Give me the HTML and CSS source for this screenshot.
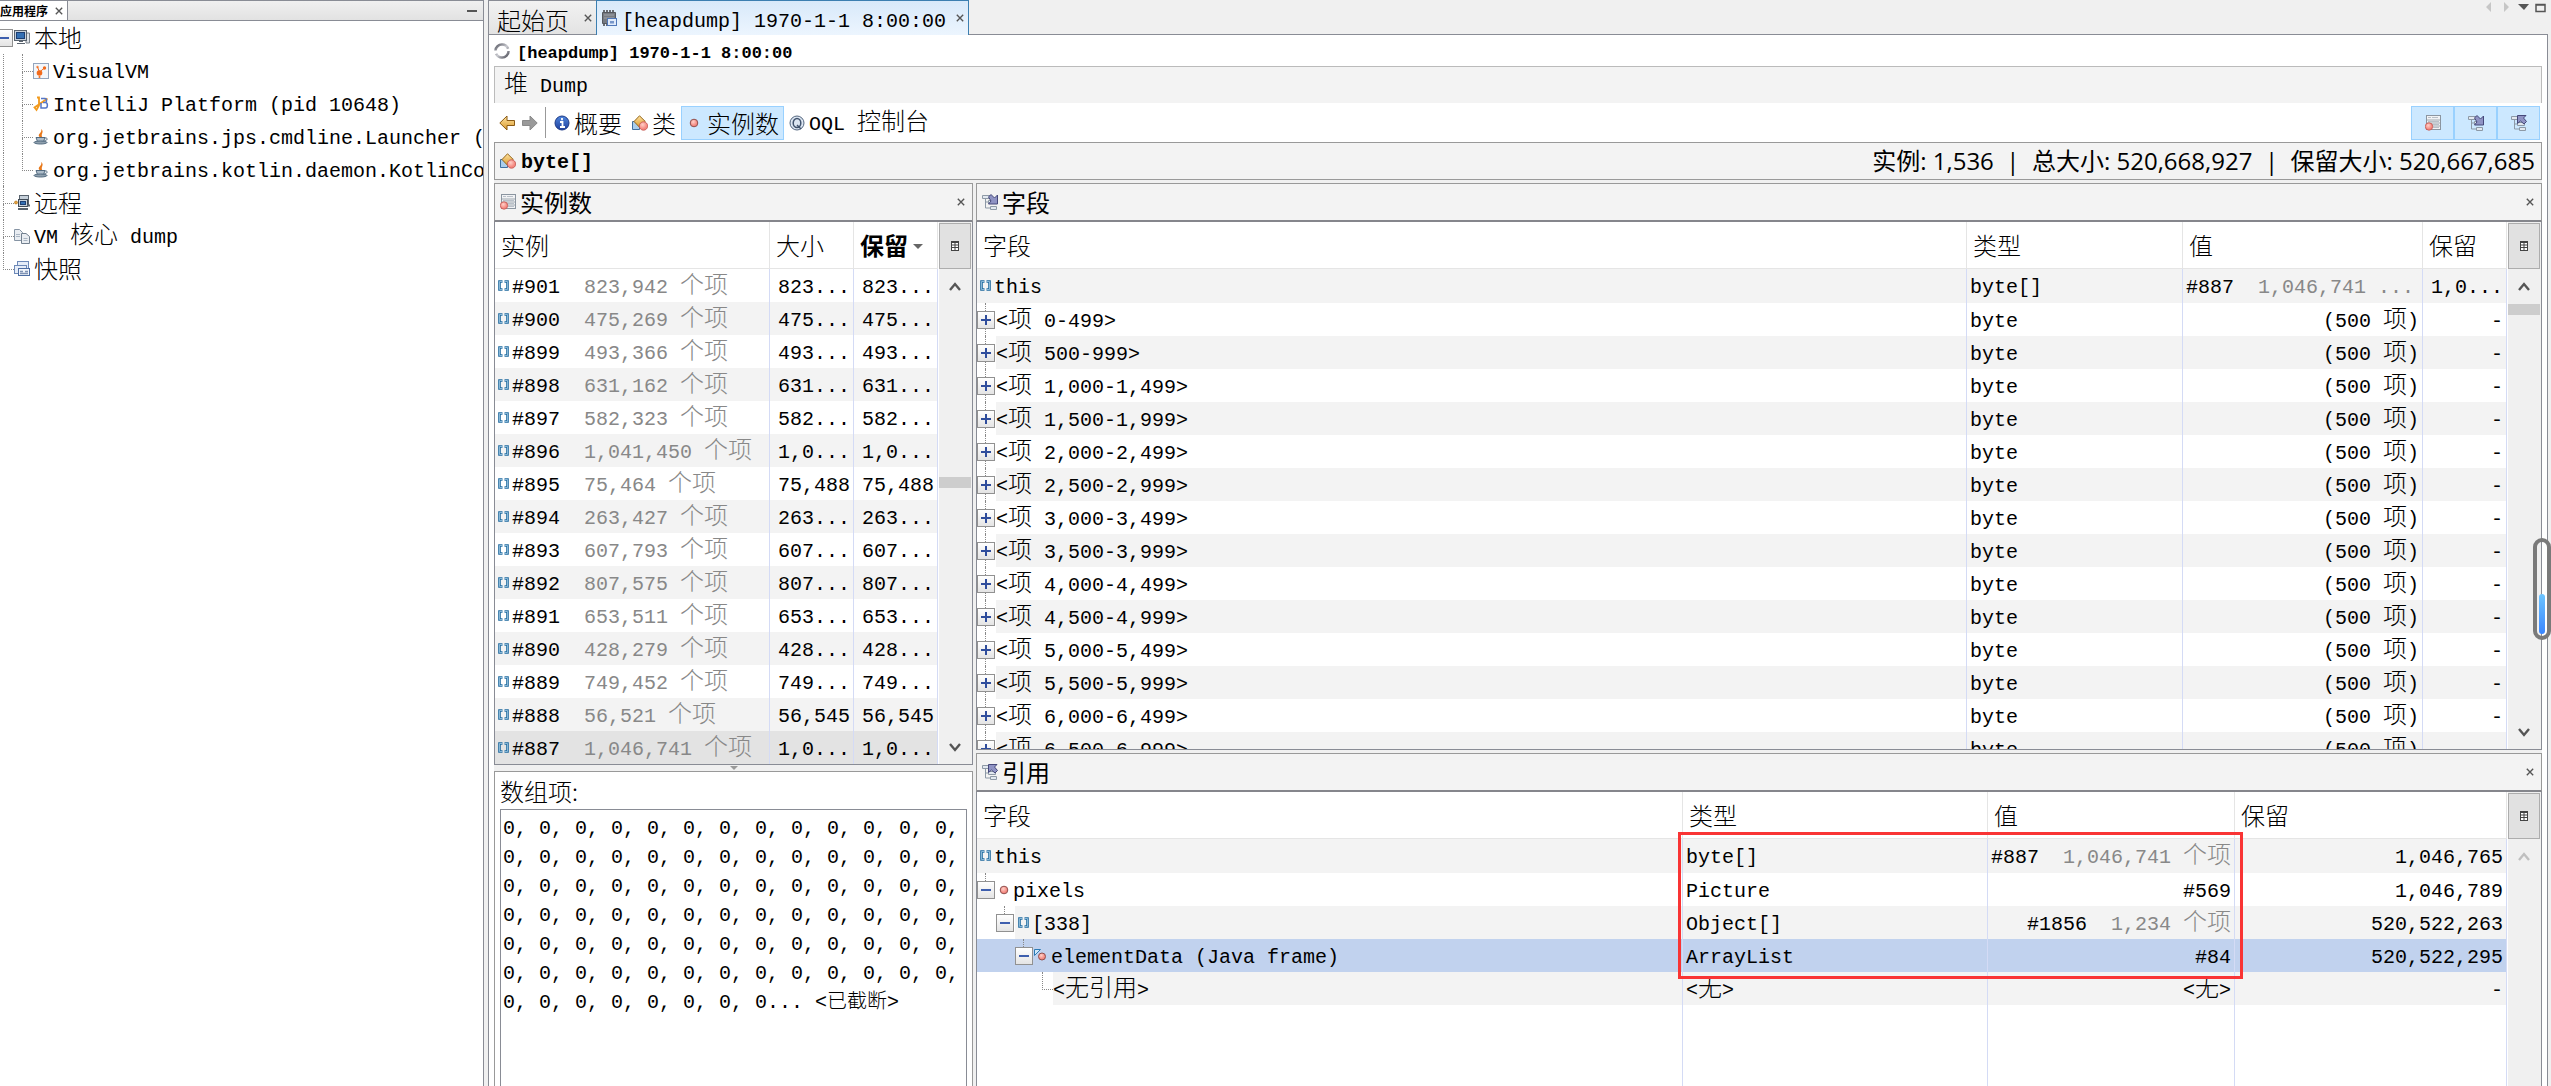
FILE: index.html
```html
<!DOCTYPE html>
<html lang="zh-CN">
<head>
<meta charset="utf-8">
<title>VisualVM</title>
<link rel="stylesheet" href="styles.css">
</head>
<body>
<svg class="defs" aria-hidden="true">
  <defs>
    <linearGradient id="gold" x1="0" y1="0" x2="0" y2="1"><stop offset="0" stop-color="#ffe3a0"/><stop offset="1" stop-color="#d99a2e"/></linearGradient>
    <linearGradient id="blue" x1="0" y1="0" x2="0" y2="1"><stop offset="0" stop-color="#4f86dd"/><stop offset="1" stop-color="#1e3f9c"/></linearGradient>
    <radialGradient id="rose" cx=".4" cy=".35"><stop offset="0" stop-color="#ffd0c8"/><stop offset="1" stop-color="#f58880"/></radialGradient>
    <linearGradient id="ring" x1="0" y1="0" x2="1" y2="1"><stop offset="0" stop-color="#5b5c66"/><stop offset=".5" stop-color="#c9cad0"/><stop offset="1" stop-color="#4a4b55"/></linearGradient>
  </defs>
  <symbol id="i-host" viewBox="0 0 16 16"><path d="M12 3h3.500v10H12z" fill="#dfe3e8" stroke="#7b828b"/><rect x=".5" y=".5" width="12" height="10" fill="#c6d0da" stroke="#59636e"/><rect x="2.500" y="2.500" width="8" height="6" fill="#3470b4" stroke="#1d3f73"/><path d="M3 13.500h8M5 11.500h4" stroke="#59636e"/></symbol>
  <symbol id="i-vvm" viewBox="0 0 16 16"><rect x=".5" y=".5" width="15" height="15" fill="#f3f6fa" stroke="#93a5bd"/><circle cx="6.500" cy="10" r="2.800" fill="#f26a1b"/><circle cx="11.500" cy="5" r="1.700" fill="#f26a1b"/><circle cx="4.500" cy="4" r="1.200" fill="#f58b4c"/><circle cx="6.500" cy="14" r="1" fill="#f26a1b"/><path d="M6.500 9l5-4M6.500 9l-2-5" stroke="#f26a1b"/></symbol>
  <symbol id="i-idea" viewBox="0 0 16 16"><path d="M4 1.500h2V9.500L3.500 14 1.500 11.500 14.500 2.500" fill="none" stroke="#f29a1d" stroke-width="1.800"/><path d="M8 2.500h4c2 0 2 4 0 4h-2h2.500c2.500 0 2.500 5.500 0 5.500H8V7" fill="none" stroke="#5577c8" stroke-width="1.500"/></symbol>
  <symbol id="i-java" viewBox="0 0 16 16"><path d="M7 8.500C3 5 10 4 8 0c4 3-1 5 1.500 8.500" fill="#e8791c"/><path d="M3 8.500h9l-1.500 4h-6z" fill="#aebdca" stroke="#536b80"/><path d="M12 9c3-.5 3 2.500-.5 2.500" fill="none" stroke="#536b80"/><ellipse cx="7.500" cy="13.500" rx="6.500" ry="1.500" fill="#8fa0ae" stroke="#536b80"/></symbol>
  <symbol id="i-remote" viewBox="0 0 16 16"><rect x="5.500" y=".5" width="9" height="9" fill="#c6d0da" stroke="#59636e"/><rect x="4.500" y="4.500" width="9" height="7" fill="#c6d0da" stroke="#414b56"/><rect x="6.500" y="6.500" width="5" height="3" fill="#3470b4" stroke="#1d3f73"/><path d="M4 14h10M13 10.500h3" stroke="#59636e" stroke-width="2"/><circle cx="2" cy="7.500" r="1.500" fill="#e8a33a" stroke="#a86a12" stroke-width=".6"/></symbol>
  <symbol id="i-core" viewBox="0 0 16 16"><path d="M.5 1.500h5l3 3v8h-8z" fill="#e9edf2" stroke="#8694a4"/><path d="M7.500 5.500h4.500l3.500 3v7h-8z" fill="#e9edf2" stroke="#72808f"/><path d="M2 6.500h4M2 8.500h4M9.500 10.500h4M9.500 12.500h4" stroke="#a9b5c2"/></symbol>
  <symbol id="i-snap" viewBox="0 0 16 16"><rect x="3.500" y=".5" width="11" height="9" fill="#e6edf8" stroke="#6d89b8"/><rect x=".5" y="4.500" width="12" height="8" fill="#e6edf8" stroke="#6d89b8"/><rect x="4.500" y="7.500" width="11" height="7" fill="#f2f6fc" stroke="#4d6da3"/><path d="M6 10.500h3M11 10.500h3M6 12.500h8" stroke="#7e92b4" stroke-width="1.500"/></symbol>
  <symbol id="i-heap" viewBox="0 0 16 16"><path d="M1.500 2.500h13v11h-13z" fill="#777b82" stroke="#55585e"/><path d="M2 1h12M2 15h6" stroke="#6a6d73" stroke-width="2" stroke-dasharray="2 1"/><path d="M3 5h10M3 8h10" stroke="#a2a5aa"/><rect x="6.500" y="8.500" width="9" height="7" fill="#dfeafa" stroke="#4f77b8"/><rect x="9" y="11" width="4" height="2.500" fill="#7796c9"/></symbol>
  <symbol id="i-ring" viewBox="0 0 16 16"><circle cx="8" cy="8" r="6.500" fill="none" stroke="url(#ring)" stroke-width="2.500" stroke-dasharray="17 3.400"/></symbol>
  <symbol id="i-back" viewBox="0 0 16 16"><path d="M.8 8L8 1v4.500h7.500v5H8V15z" fill="url(#gold)" stroke="#8b5a14"/></symbol>
  <symbol id="i-fwd" viewBox="0 0 16 16"><path d="M15.200 8L8 1v4.500H.5v5H8V15z" fill="#9a9a9a" stroke="#8a8a8a"/></symbol>
  <symbol id="i-info" viewBox="0 0 16 16"><circle cx="8" cy="8" r="7" fill="url(#blue)" stroke="#1d3a86"/><path d="M8 3v2.300M6 7h2.500v5M6 12h5" stroke="#fff" stroke-width="1.800" fill="none"/></symbol>
  <symbol id="i-class" viewBox="0 0 16 16"><path d="M.5 6.500h7v8h-7z" fill="#a9cdec" stroke="#3f6f9f"/><path d="M7.500.8l5.800 5.700-5.800 5.700L2 6.500z" fill="url(#gold)" stroke="#94661a"/><circle cx="11.500" cy="11" r="4.200" fill="url(#rose)" stroke="#c0544f" stroke-width=".8"/></symbol>
  <symbol id="i-dot" viewBox="0 0 16 16"><circle cx="8" cy="8" r="3.800" fill="url(#rose)" stroke="#8f4f4d"/></symbol>
  <symbol id="i-static" viewBox="0 0 16 16"><path d="M.5 1.500h6l-6 6z" fill="#cfe6f7" stroke="#2b7ab5"/><circle cx="8" cy="8.500" r="3.500" fill="url(#rose)" stroke="#8f4f4d"/></symbol>
  <symbol id="i-oql" viewBox="0 0 16 16"><circle cx="8" cy="8" r="7" fill="#dce6f2" stroke="#53657e"/><ellipse cx="8" cy="8" rx="3.800" ry="4.500" fill="none" stroke="#41536d" stroke-width="1.500"/><path d="M8 10l4 4" stroke="#41536d" stroke-width="1.500"/></symbol>
  <symbol id="i-list" viewBox="0 0 16 16"><rect x="1.500" y=".5" width="14" height="14" fill="#f2f3f5" stroke="#8b95a0"/><path d="M3 2.500h3M7 2.500h6M3 6.500h11M3 9.500h11M8 12.500h6" stroke="#b9c0c8"/><path d="M2 5h13M2 8h13M2 11h13" stroke="#8b95a0" stroke-width=".8"/><circle cx="4" cy="11.500" r="3.700" fill="url(#rose)" stroke="#c0544f" stroke-width=".8"/></symbol>
  <symbol id="i-fields" viewBox="0 0 16 16"><path d="M.5 1.500h8v3h-8zM6.500 6.500h7v3h-7zM8.500 12.500h6v3h-6z" fill="#e3e9f0" stroke="#8d99a6"/><path d="M3.500 5v9h5M3.500 8h3" fill="none" stroke="#8d99a6"/><path d="M6.500 3l2.500-2.500 3.500 3.500 3-3v9h-9l2.500-3z" fill="#8f93c4" stroke="#45487a"/></symbol>
  <symbol id="i-refs" viewBox="0 0 16 16"><path d="M.5 1.500h8v3h-8zM6.500 7.500h7v3h-7zM8.500 12.500h6v3h-6z" fill="#e3e9f0" stroke="#8d99a6"/><path d="M3.500 5v9h5M3.500 9h3" fill="none" stroke="#8d99a6"/><path d="M6.500.5h8.500l-2.500 2.500 3 3.500-2.500 2.500-3.500-3-3 2.500z" fill="#8f93c4" stroke="#45487a"/></symbol>
  <symbol id="i-arr" viewBox="0 0 16 16"><path d="M7.500 3.500h-3v8h3M9.500 3.500h3v8h-3" fill="none" stroke="#1f6a9f" stroke-width="2.600"/><path d="M7.500 3.500h-3v8h3M9.500 3.500h3v8h-3" fill="none" stroke="#b5d9ef" stroke-width=".7"/></symbol>
  <symbol id="i-x" viewBox="0 0 10 10"><path d="M1 1l8 8M9 1L1 9" stroke="#555" stroke-width="1.700"/></symbol>
  <symbol id="i-plus" viewBox="0 0 10 10"><path d="M0 5h10M5 0v10" stroke="#2f4d9c" stroke-width="2"/></symbol>
  <symbol id="i-minus" viewBox="0 0 10 10"><path d="M0 5h10" stroke="#3e5fae" stroke-width="2"/></symbol>
  <symbol id="i-up" viewBox="0 0 12 12"><path d="M1 9l5-6 5 6" fill="none" stroke="currentColor" stroke-width="2.400"/></symbol>
  <symbol id="i-down" viewBox="0 0 12 12"><path d="M1 3l5 6 5-6" fill="none" stroke="currentColor" stroke-width="2.400"/></symbol>
  <symbol id="i-cols" viewBox="0 0 8 10"><rect x=".5" y=".5" width="7" height="9" fill="#fff" stroke="#444"/><path d="M0 1.500h8M0 4h8M0 6.500h8M4 2v8" stroke="#444"/></symbol>
</svg>

<div class="app">
  <aside class="sidebar">
    <div class="side-tabs">
      <span class="side-tab">应用程序<button class="close" aria-label="关闭"><svg><use href="#i-x"/></svg></button></span>
      <button class="minimize" aria-label="最小化"></button>
    </div>
    <ul class="tree">
      <li class="root-row"><button class="toggle" aria-label="折叠"><svg><use href="#i-minus"/></svg></button><svg class="icon"><use href="#i-host"/></svg><span class="zh">本地</span></li>
      <li><i class="guide"></i><i class="elbow"></i><svg class="icon"><use href="#i-vvm"/></svg><span>VisualVM</span></li>
      <li><i class="guide"></i><i class="elbow"></i><svg class="icon"><use href="#i-idea"/></svg><span>IntelliJ Platform (pid 10648)</span></li>
      <li><i class="guide"></i><i class="elbow"></i><svg class="icon"><use href="#i-java"/></svg><span>org.jetbrains.jps.cmdline.Launcher (</span></li>
      <li><i class="guide"></i><i class="elbow last"></i><svg class="icon"><use href="#i-java"/></svg><span>org.jetbrains.kotlin.daemon.KotlinCo</span></li>
      <li><i class="elbow"></i><svg class="icon"><use href="#i-remote"/></svg><span class="zh">远程</span></li>
      <li><i class="elbow"></i><svg class="icon"><use href="#i-core"/></svg><span>VM <span class="zh">核心</span> dump</span></li>
      <li><i class="elbow last"></i><svg class="icon"><use href="#i-snap"/></svg><span class="zh">快照</span></li>
    </ul>
  </aside>

  <main class="main">
    <nav class="tabs">
      <div class="tab"><span class="zh">起始页</span><button class="close" aria-label="关闭"><svg><use href="#i-x"/></svg></button></div>
      <div class="tab active"><svg class="icon"><use href="#i-heap"/></svg><span class="tab-text">[heapdump] 1970-1-1 8:00:00</span><button class="close" aria-label="关闭"><svg><use href="#i-x"/></svg></button></div>
      <div class="tab-tools">
        <svg viewBox="0 0 60 12"><path d="M6 1v10L1 6zM19 1v10l5-5z" fill="#c6c6c6"/><path d="M33 3h11l-5 6z" fill="#555"/><path d="M51 3.500h9v7h-9zM50.500 4h10" fill="none" stroke="#555" stroke-width="1.500"/></svg>
      </div>
    </nav>

    <div class="content">
      <header class="doc-title"><svg class="icon"><use href="#i-ring"/></svg><h1>[heapdump] 1970-1-1 8:00:00</h1></header>
      <div class="section-bar"><span class="zh">堆</span> Dump</div>
      <div class="toolbar">
        <button class="nav" aria-label="后退"><svg class="icon"><use href="#i-back"/></svg></button>
        <button class="nav" aria-label="前进"><svg class="icon"><use href="#i-fwd"/></svg></button>
        <span class="sep"></span>
        <button class="view"><svg class="icon"><use href="#i-info"/></svg><span class="zh">概要</span></button>
        <button class="view"><svg class="icon"><use href="#i-class"/></svg><span class="zh">类</span></button>
        <button class="view selected"><svg class="icon"><use href="#i-dot"/></svg><span class="zh">实例数</span></button>
        <button class="view"><svg class="icon"><use href="#i-oql"/></svg><span class="mixed">OQL <span class="zh">控制台</span></span></button>
        <div class="switches">
          <button aria-label="实例数"><svg class="icon"><use href="#i-list"/></svg></button><button aria-label="字段"><svg class="icon"><use href="#i-fields"/></svg></button><button aria-label="引用"><svg class="icon"><use href="#i-refs"/></svg></button>
        </div>
      </div>
      <div class="class-bar"><svg class="icon"><use href="#i-class"/></svg><b>byte[]</b><span class="totals">实例: 1,536&nbsp; |&nbsp; 总大小: 520,668,927&nbsp; |&nbsp; 保留大小: 520,667,685</span></div>

      <div class="panels">
        <div class="left-col">
          <section>
            <div class="panel-head"><svg class="icon"><use href="#i-list"/></svg><h2>实例数</h2><button class="close" aria-label="关闭"><svg><use href="#i-x"/></svg></button></div>
            <div class="panel-body">
              <div class="table-wrap">
                <table class="instances">
                  <colgroup><col><col class="w84"><col class="w84"></colgroup>
                  <thead><tr><th><span class="zh">实例</span></th><th><span class="zh">大小</span></th><th class="sorted"><span class="zh">保留</span></th></tr></thead>
                  <tbody>
                    <tr><td><svg class="icon"><use href="#i-arr"/></svg>#901<em>823,942 <span class="zh">个项</span></em></td><td>823...</td><td>823...</td></tr>
                    <tr><td><svg class="icon"><use href="#i-arr"/></svg>#900<em>475,269 <span class="zh">个项</span></em></td><td>475...</td><td>475...</td></tr>
                    <tr><td><svg class="icon"><use href="#i-arr"/></svg>#899<em>493,366 <span class="zh">个项</span></em></td><td>493...</td><td>493...</td></tr>
                    <tr><td><svg class="icon"><use href="#i-arr"/></svg>#898<em>631,162 <span class="zh">个项</span></em></td><td>631...</td><td>631...</td></tr>
                    <tr><td><svg class="icon"><use href="#i-arr"/></svg>#897<em>582,323 <span class="zh">个项</span></em></td><td>582...</td><td>582...</td></tr>
                    <tr><td><svg class="icon"><use href="#i-arr"/></svg>#896<em>1,041,450 <span class="zh">个项</span></em></td><td>1,0...</td><td>1,0...</td></tr>
                    <tr><td><svg class="icon"><use href="#i-arr"/></svg>#895<em>75,464 <span class="zh">个项</span></em></td><td>75,488</td><td>75,488</td></tr>
                    <tr><td><svg class="icon"><use href="#i-arr"/></svg>#894<em>263,427 <span class="zh">个项</span></em></td><td>263...</td><td>263...</td></tr>
                    <tr><td><svg class="icon"><use href="#i-arr"/></svg>#893<em>607,793 <span class="zh">个项</span></em></td><td>607...</td><td>607...</td></tr>
                    <tr><td><svg class="icon"><use href="#i-arr"/></svg>#892<em>807,575 <span class="zh">个项</span></em></td><td>807...</td><td>807...</td></tr>
                    <tr><td><svg class="icon"><use href="#i-arr"/></svg>#891<em>653,511 <span class="zh">个项</span></em></td><td>653...</td><td>653...</td></tr>
                    <tr><td><svg class="icon"><use href="#i-arr"/></svg>#890<em>428,279 <span class="zh">个项</span></em></td><td>428...</td><td>428...</td></tr>
                    <tr><td><svg class="icon"><use href="#i-arr"/></svg>#889<em>749,452 <span class="zh">个项</span></em></td><td>749...</td><td>749...</td></tr>
                    <tr><td><svg class="icon"><use href="#i-arr"/></svg>#888<em>56,521 <span class="zh">个项</span></em></td><td>56,545</td><td>56,545</td></tr>
                    <tr class="inactive"><td><svg class="icon"><use href="#i-arr"/></svg>#887<em>1,046,741 <span class="zh">个项</span></em></td><td>1,0...</td><td>1,0...</td></tr>
                  </tbody>
                </table>
              </div>
              <div class="scroll">
                <button class="cols" aria-label="列"><svg><use href="#i-cols"/></svg></button>
                <button class="arrow" aria-label="向上"><svg><use href="#i-up"/></svg></button>
                <i style="flex-grow:173"></i><i class="thumb"></i><i style="flex-grow:241"></i>
                <button class="arrow" aria-label="向下"><svg><use href="#i-down"/></svg></button>
              </div>
            </div>
          </section>
          <div class="splitter"><svg viewBox="0 0 8 4"><path d="M0 0h8L4 4z" fill="#999"/></svg></div>
          <section class="array">
            <label class="zh" for="items">数组项:</label>
            <textarea id="items" readonly spellcheck="false">0, 0, 0, 0, 0, 0, 0, 0, 0, 0, 0, 0, 0,
0, 0, 0, 0, 0, 0, 0, 0, 0, 0, 0, 0, 0,
0, 0, 0, 0, 0, 0, 0, 0, 0, 0, 0, 0, 0,
0, 0, 0, 0, 0, 0, 0, 0, 0, 0, 0, 0, 0,
0, 0, 0, 0, 0, 0, 0, 0, 0, 0, 0, 0, 0,
0, 0, 0, 0, 0, 0, 0, 0, 0, 0, 0, 0, 0,
0, 0, 0, 0, 0, 0, 0, 0... &lt;已截断&gt;</textarea>
          </section>
        </div>

        <div class="right-col">
          <section class="panel">
            <div class="panel-head"><svg class="icon"><use href="#i-fields"/></svg><h2>字段</h2><button class="close" aria-label="关闭"><svg><use href="#i-x"/></svg></button></div>
            <div class="panel-body">
              <div class="table-wrap">
                <table class="fields">
                  <colgroup><col><col class="w216"><col class="w240"><col class="w84"></colgroup>
                  <thead><tr><th><span class="zh">字段</span></th><th><span class="zh">类型</span></th><th><span class="zh">值</span></th><th><span class="zh">保留</span></th></tr></thead>
                  <tbody>
                    <tr class="self"><td><div class="node"><svg class="icon"><use href="#i-arr"/></svg><span>this</span></div></td><td>byte[]</td><td class="start">#887<em>1,046,741 ...</em></td><td>1,0...</td></tr>
                    <tr><td><div class="node"><i class="twig on"><button class="toggle" aria-label="展开"><svg><use href="#i-plus"/></svg></button></i><span>&lt;<span class="zh">项</span> 0-499&gt;</span></div></td><td>byte</td><td>(500 <span class="zh">项</span>)</td><td>-</td></tr>
                    <tr><td><div class="node"><i class="twig on"><button class="toggle" aria-label="展开"><svg><use href="#i-plus"/></svg></button></i><span>&lt;<span class="zh">项</span> 500-999&gt;</span></div></td><td>byte</td><td>(500 <span class="zh">项</span>)</td><td>-</td></tr>
                    <tr><td><div class="node"><i class="twig on"><button class="toggle" aria-label="展开"><svg><use href="#i-plus"/></svg></button></i><span>&lt;<span class="zh">项</span> 1,000-1,499&gt;</span></div></td><td>byte</td><td>(500 <span class="zh">项</span>)</td><td>-</td></tr>
                    <tr><td><div class="node"><i class="twig on"><button class="toggle" aria-label="展开"><svg><use href="#i-plus"/></svg></button></i><span>&lt;<span class="zh">项</span> 1,500-1,999&gt;</span></div></td><td>byte</td><td>(500 <span class="zh">项</span>)</td><td>-</td></tr>
                    <tr><td><div class="node"><i class="twig on"><button class="toggle" aria-label="展开"><svg><use href="#i-plus"/></svg></button></i><span>&lt;<span class="zh">项</span> 2,000-2,499&gt;</span></div></td><td>byte</td><td>(500 <span class="zh">项</span>)</td><td>-</td></tr>
                    <tr><td><div class="node"><i class="twig on"><button class="toggle" aria-label="展开"><svg><use href="#i-plus"/></svg></button></i><span>&lt;<span class="zh">项</span> 2,500-2,999&gt;</span></div></td><td>byte</td><td>(500 <span class="zh">项</span>)</td><td>-</td></tr>
                    <tr><td><div class="node"><i class="twig on"><button class="toggle" aria-label="展开"><svg><use href="#i-plus"/></svg></button></i><span>&lt;<span class="zh">项</span> 3,000-3,499&gt;</span></div></td><td>byte</td><td>(500 <span class="zh">项</span>)</td><td>-</td></tr>
                    <tr><td><div class="node"><i class="twig on"><button class="toggle" aria-label="展开"><svg><use href="#i-plus"/></svg></button></i><span>&lt;<span class="zh">项</span> 3,500-3,999&gt;</span></div></td><td>byte</td><td>(500 <span class="zh">项</span>)</td><td>-</td></tr>
                    <tr><td><div class="node"><i class="twig on"><button class="toggle" aria-label="展开"><svg><use href="#i-plus"/></svg></button></i><span>&lt;<span class="zh">项</span> 4,000-4,499&gt;</span></div></td><td>byte</td><td>(500 <span class="zh">项</span>)</td><td>-</td></tr>
                    <tr><td><div class="node"><i class="twig on"><button class="toggle" aria-label="展开"><svg><use href="#i-plus"/></svg></button></i><span>&lt;<span class="zh">项</span> 4,500-4,999&gt;</span></div></td><td>byte</td><td>(500 <span class="zh">项</span>)</td><td>-</td></tr>
                    <tr><td><div class="node"><i class="twig on"><button class="toggle" aria-label="展开"><svg><use href="#i-plus"/></svg></button></i><span>&lt;<span class="zh">项</span> 5,000-5,499&gt;</span></div></td><td>byte</td><td>(500 <span class="zh">项</span>)</td><td>-</td></tr>
                    <tr><td><div class="node"><i class="twig on"><button class="toggle" aria-label="展开"><svg><use href="#i-plus"/></svg></button></i><span>&lt;<span class="zh">项</span> 5,500-5,999&gt;</span></div></td><td>byte</td><td>(500 <span class="zh">项</span>)</td><td>-</td></tr>
                    <tr><td><div class="node"><i class="twig on"><button class="toggle" aria-label="展开"><svg><use href="#i-plus"/></svg></button></i><span>&lt;<span class="zh">项</span> 6,000-6,499&gt;</span></div></td><td>byte</td><td>(500 <span class="zh">项</span>)</td><td>-</td></tr>
                    <tr><td><div class="node"><i class="twig on"><button class="toggle" aria-label="展开"><svg><use href="#i-plus"/></svg></button></i><span>&lt;<span class="zh">项</span> 6,500-6,999&gt;</span></div></td><td>byte</td><td>(500 <span class="zh">项</span>)</td><td>-</td></tr>
                  </tbody>
                </table>
              </div>
              <div class="scroll">
                <button class="cols" aria-label="列"><svg><use href="#i-cols"/></svg></button>
                <button class="arrow" aria-label="向上"><svg><use href="#i-up"/></svg></button>
                <i class="thumb"></i><i class="rest"></i>
                <button class="arrow" aria-label="向下"><svg><use href="#i-down"/></svg></button>
              </div>
            </div>
          </section>

          <section class="panel open-end">
            <div class="panel-head"><svg class="icon"><use href="#i-refs"/></svg><h2>引用</h2><button class="close" aria-label="关闭"><svg><use href="#i-x"/></svg></button></div>
            <div class="panel-body">
              <div class="table-wrap">
                <table class="refs">
                  <colgroup><col><col class="w305"><col class="w247"><col class="w272"></colgroup>
                  <thead><tr><th><span class="zh">字段</span></th><th><span class="zh">类型</span></th><th><span class="zh">值</span></th><th><span class="zh">保留</span></th></tr></thead>
                  <tbody>
                    <tr class="self"><td><div class="node"><svg class="icon"><use href="#i-arr"/></svg><span>this</span></div></td><td>byte[]</td><td>#887<em>1,046,741 <span class="zh">个项</span></em></td><td>1,046,765</td></tr>
                    <tr><td><div class="node"><i class="twig"><button class="toggle" aria-label="折叠"><svg><use href="#i-minus"/></svg></button></i><svg class="icon"><use href="#i-dot"/></svg><span>pixels</span></div></td><td>Picture</td><td>#569</td><td>1,046,789</td></tr>
                    <tr><td><div class="node"><i class="pad"></i><i class="twig"><button class="toggle" aria-label="折叠"><svg><use href="#i-minus"/></svg></button></i><svg class="icon"><use href="#i-arr"/></svg><span>[338]</span></div></td><td>Object[]</td><td>#1856<em>1,234 <span class="zh">个项</span></em></td><td>520,522,263</td></tr>
                    <tr class="active"><td><div class="node"><i class="pad"></i><i class="pad"></i><i class="twig"><button class="toggle" aria-label="折叠"><svg><use href="#i-minus"/></svg></button></i><svg class="icon"><use href="#i-static"/></svg><span>elementData (Java frame)</span></div></td><td>ArrayList</td><td>#84</td><td>520,522,295</td></tr>
                    <tr><td><div class="node"><i class="pad"></i><i class="pad"></i><i class="pad"></i><i class="pad end"><i class="elbow last"></i></i><span>&lt;<span class="zh">无引用</span>&gt;</span></div></td><td>&lt;<span class="zh">无</span>&gt;</td><td>&lt;<span class="zh">无</span>&gt;</td><td>-</td></tr>
                    <tr class="filler"><td></td><td></td><td></td><td></td></tr>
                  </tbody>
                </table>
              </div>
              <div class="scroll off">
                <button class="cols" aria-label="列"><svg><use href="#i-cols"/></svg></button>
                <button class="arrow" aria-label="向上"><svg><use href="#i-up"/></svg></button>
              </div>
            </div>
            <div class="highlight"></div>
          </section>
        </div>
      </div>
    </div>
  </main>
  <div class="gauge"><i></i></div>
</div>
</body>
</html>
```
FILE: styles.css
```css
* { box-sizing: border-box; }
body {
  margin: 0;
  background: #f0f0f0;
  color: #000;
  font: 20px/30px "Liberation Mono", "Noto Sans CJK SC", monospace;
}
h1, h2, ul { margin: 0; padding: 0; list-style: none; }
button { margin: 0; padding: 0; border: 0; background: none; font: inherit; color: inherit; }
svg { display: block; }
em { font-style: normal; color: #888; margin-left: 24px; }
i { font-style: normal; }
.defs { position: absolute; width: 0; height: 0; }
.zh { font-family: "Noto Sans CJK SC", sans-serif; font-size: 24px; line-height: 16px; font-weight: 300; }
.icon { width: 16px; height: 16px; flex: none; }
.close { display: flex; }
.close svg { width: 8px; height: 8px; }

.app { display: flex; height: 100vh; overflow: hidden; position: relative; }

/* applications tree */
.sidebar { flex: 0 0 484px; margin-right: 4px; background: #fff; border-right: 1px solid #898c95; overflow: hidden; }
.side-tabs { display: flex; height: 21px; border: solid #898c95; border-width: 1px 0; background: linear-gradient(#f0f0f0, #e2e2e2); }
.side-tab {
  display: flex; align-items: center; gap: 7px; width: 68px; background: #fff; border-right: 1px solid #898c95;
  font: bold 12px/18px "Noto Sans CJK SC", sans-serif; white-space: nowrap;
}
.minimize { width: 10px; height: 2px; margin: 9px 6px 0 auto; background: #555; }
.tree li { display: flex; align-items: center; height: 33px; padding-left: 3px; white-space: nowrap; }
.tree li > span { margin-left: 4px; padding-top: 4px; }
.tree li > .zh { padding: 0 0 2px; }
.tree .root-row { padding: 0; }
.root-row .toggle { margin: 0 1px 0 -5px; }
.guide { flex: 0 0 19px; height: 33px; border-left: 1px dotted #888; }
.elbow { flex: 0 0 11px; height: 33px; }
.elbow::before, .elbow::after { content: ""; display: block; height: 16px; border-left: 1px dotted #888; }
.elbow::before { height: 17px; border-bottom: 1px dotted #888; }
.elbow.last::after { border: 0; }
.toggle {
  display: flex; align-items: center; justify-content: center; flex: none; width: 18px; height: 18px;
  border: 1px solid #919191; background: linear-gradient(#fff, #e4e4e4);
}
.toggle svg { width: 10px; height: 10px; }

/* document tabs */
.main { flex: 1; min-width: 0; margin-right: 3px; display: flex; flex-direction: column; }
.tabs { display: flex; height: 35px; }
.tab {
  display: flex; align-items: center; width: 108px; padding: 0 4px 0 8px;
  border: solid #898c95; border-width: 1px 0 1px 1px; background: linear-gradient(#f2f2f2, #e3e3e3);
}
.tab > span { padding-top: 4px; white-space: nowrap; }
.tab .close { margin-left: auto; }
.tab.active { width: 373px; padding-left: 4px; border: solid #3c7fb1; border-width: 1px 1px 0; background: linear-gradient(#d8e9fa, #ecf5fe); }
.tab .tab-text { margin-left: 5px; padding-top: 8px; }
.tab-tools { flex: 1; border-bottom: 1px solid #898c95; }
.tab-tools svg { width: 60px; height: 12px; margin: 1px 3px 0 auto; overflow: visible; }
.content { flex: 1; min-height: 0; display: flex; flex-direction: column; padding: 0 5px; background: #fff; border: solid #898c95; border-width: 0 1px; }
.doc-title { display: flex; align-items: center; gap: 7px; height: 31px; }
.doc-title h1 { font-size: 17px; line-height: 24px; padding-top: 6px; }
.section-bar { height: 37px; padding: 5px 9px 0; background: #f3f3f3; border: 1px solid #bbb; border-bottom: 0; }

/* toolbar */
.toolbar { display: flex; align-items: center; height: 39px; padding: 0 2px 0 5px; }
.nav { margin-right: 7px; }
.sep { width: 1px; height: 31px; margin-right: 3px; background: #999; }
.view { display: flex; align-items: center; gap: 4px; height: 34px; padding: 0 4px; border: 1px solid transparent; white-space: nowrap; }
.view > .mixed { padding-top: 4px; }
.view.selected { gap: 5px; width: 103px; border-color: #99d1ff; background: #cce8ff; }
.switches { display: flex; margin-left: auto; }
.switches button { display: flex; align-items: center; justify-content: center; width: 43px; height: 34px; border: 1px solid #99d1ff; background: #cce8ff; }
.class-bar { display: flex; align-items: center; height: 38px; padding: 0 6px 0 5px; gap: 5px; background: #f3f3f3; border: 1px solid #999; }
.class-bar b { padding-top: 4px; }
.totals { margin-left: auto; font: 24px/34px "Open Sans", "Noto Sans CJK SC", sans-serif; white-space: nowrap; }

/* panels */
.panels { flex: 1; min-height: 0; display: grid; grid-template-columns: 479px minmax(0, 1fr); gap: 3px; padding-top: 3px; background: #f0f0f0; }
.left-col { display: flex; flex-direction: column; min-height: 0; }
.right-col { display: grid; grid-template-rows: minmax(0, 567fr) minmax(0, 333fr); gap: 3px; min-height: 0; }
.panel { display: flex; flex-direction: column; min-height: 0; position: relative; }
.panel-head { display: flex; align-items: center; flex: none; height: 39px; padding: 0 7px 0 5px; gap: 4px; background: #f3f3f3; border: 1px solid #999; border-bottom: 2px solid #85868c; }
.panel-head h2 { font: 400 24px/34px "Noto Sans CJK SC", sans-serif; }
.panel-head .close { margin-left: auto; }
.panel-body { display: flex; flex: 1; min-height: 0; background: #fff; border: 1px solid #898c95; border-top: 0; }
.open-end .panel-body { border-bottom: 0; }
.table-wrap { flex: 1; min-width: 0; overflow: hidden; }
table { width: 100%; height: 100%; table-layout: fixed; border-collapse: separate; border-spacing: 0; }
.w84 { width: 84px; }
.w216 { width: 216px; }
.w240 { width: 240px; }
.w247 { width: 247px; }
.w272 { width: 272px; }
.w305 { width: 305px; }
th { height: 47px; padding: 9px 0 0 6px; text-align: left; font-weight: 400; border: solid #e5e5e5; border-width: 0 1px 1px 0; }
.sorted .zh { font-weight: 700; }
.sorted::after { content: ""; display: inline-block; margin-left: 5px; border: solid transparent; border-width: 5px 5px 0; border-top-color: #666; vertical-align: 6px; }
td { height: 33px; padding: 6px 3px 0; line-height: 26px; white-space: nowrap; text-align: right; vertical-align: top; border-right: 1px solid #d4dbf5; }
tbody tr:nth-child(odd) { background: #f3f3f3; }
.instances tbody tr:nth-child(odd) { background: #fff; }
.instances tbody tr:nth-child(even) { background: #f3f3f3; }
td:first-child, .start, .fields td:nth-child(2), .refs td:nth-child(2) { text-align: left; }
td:first-child { padding-left: 0; }
.instances td .icon { display: inline-block; margin-right: 1px; vertical-align: -1px; }
.instances tbody tr.inactive { background: #e3e3e3; }
.refs tbody tr.active { background: #c1d2ee; }
.refs tbody tr.filler { background: #fff; }
.filler td { height: auto; }
.self td { height: 34px; }
.fields td:first-child, .refs td:first-child { padding: 0; }
.node { display: flex; align-items: center; height: 33px; }
.node > span { padding-top: 5px; }
.node > .icon + span { margin-left: 1px; }
.twig, .pad { flex: 0 0 19px; height: 33px; background: #fff; }
.twig { display: flex; flex-direction: column; }
.twig::before, .twig::after { content: ""; flex: 1; margin-left: 8px; }
.twig::before, .twig.on::after { border-left: 1px dotted #888; }
.active .twig, .active .pad { background: none; }
.end { padding-left: 8px; }
.end .elbow { display: block; }

/* scroll bars */
.scroll { flex: 0 0 33px; margin-left: 1px; padding-right: 1px; display: flex; flex-direction: column; background: #f0f0f0; }
.cols { display: flex; align-items: center; justify-content: center; flex: 0 0 46px; margin: 1px 0 0; background: #e1e1e1; border: 1px solid #adadad; }
.cols svg { width: 8px; height: 10px; }
.arrow { display: flex; align-items: center; justify-content: center; flex: 0 0 35px; color: #555; }
.arrow svg { width: 12px; height: 12px; }
.off .arrow { color: #bfbfbf; }
.thumb { flex: 0 0 11px; background: #cdcdcd; }
.rest { flex: 1; }

.splitter { display: flex; align-items: center; justify-content: center; flex: none; height: 6px; }
.splitter svg { width: 8px; height: 4px; }
.array { flex: 1; min-height: 0; display: flex; flex-direction: column; padding: 4px 5px 0; background: #fff; border: 1px solid #999; border-bottom: 0; }
.array label { flex: none; height: 33px; line-height: 29px; }
textarea {
  flex: 1; width: 100%; padding: 4px 2px; margin: 0; resize: none; overflow: hidden; outline: 0;
  border: 1px solid #898c95; border-bottom: 0; border-radius: 0; background: #fff; color: #000;
  font: 300 20px/29px "Liberation Mono", "Noto Sans CJK SC", monospace; white-space: pre;
}

/* overlays */
.highlight { position: absolute; top: 79px; right: 299px; width: 565px; height: 147px; border: 3px solid #f93434; }
.gauge { position: absolute; right: 0; top: 538px; width: 18px; height: 102px; border: 4px solid #7a7a7a; border-radius: 9px; display: flex; flex-direction: column; justify-content: flex-end; padding: 2px; }
.gauge i { height: 40px; border-radius: 3px; background: linear-gradient(#6cc4ff, #3a86ff); }
```
